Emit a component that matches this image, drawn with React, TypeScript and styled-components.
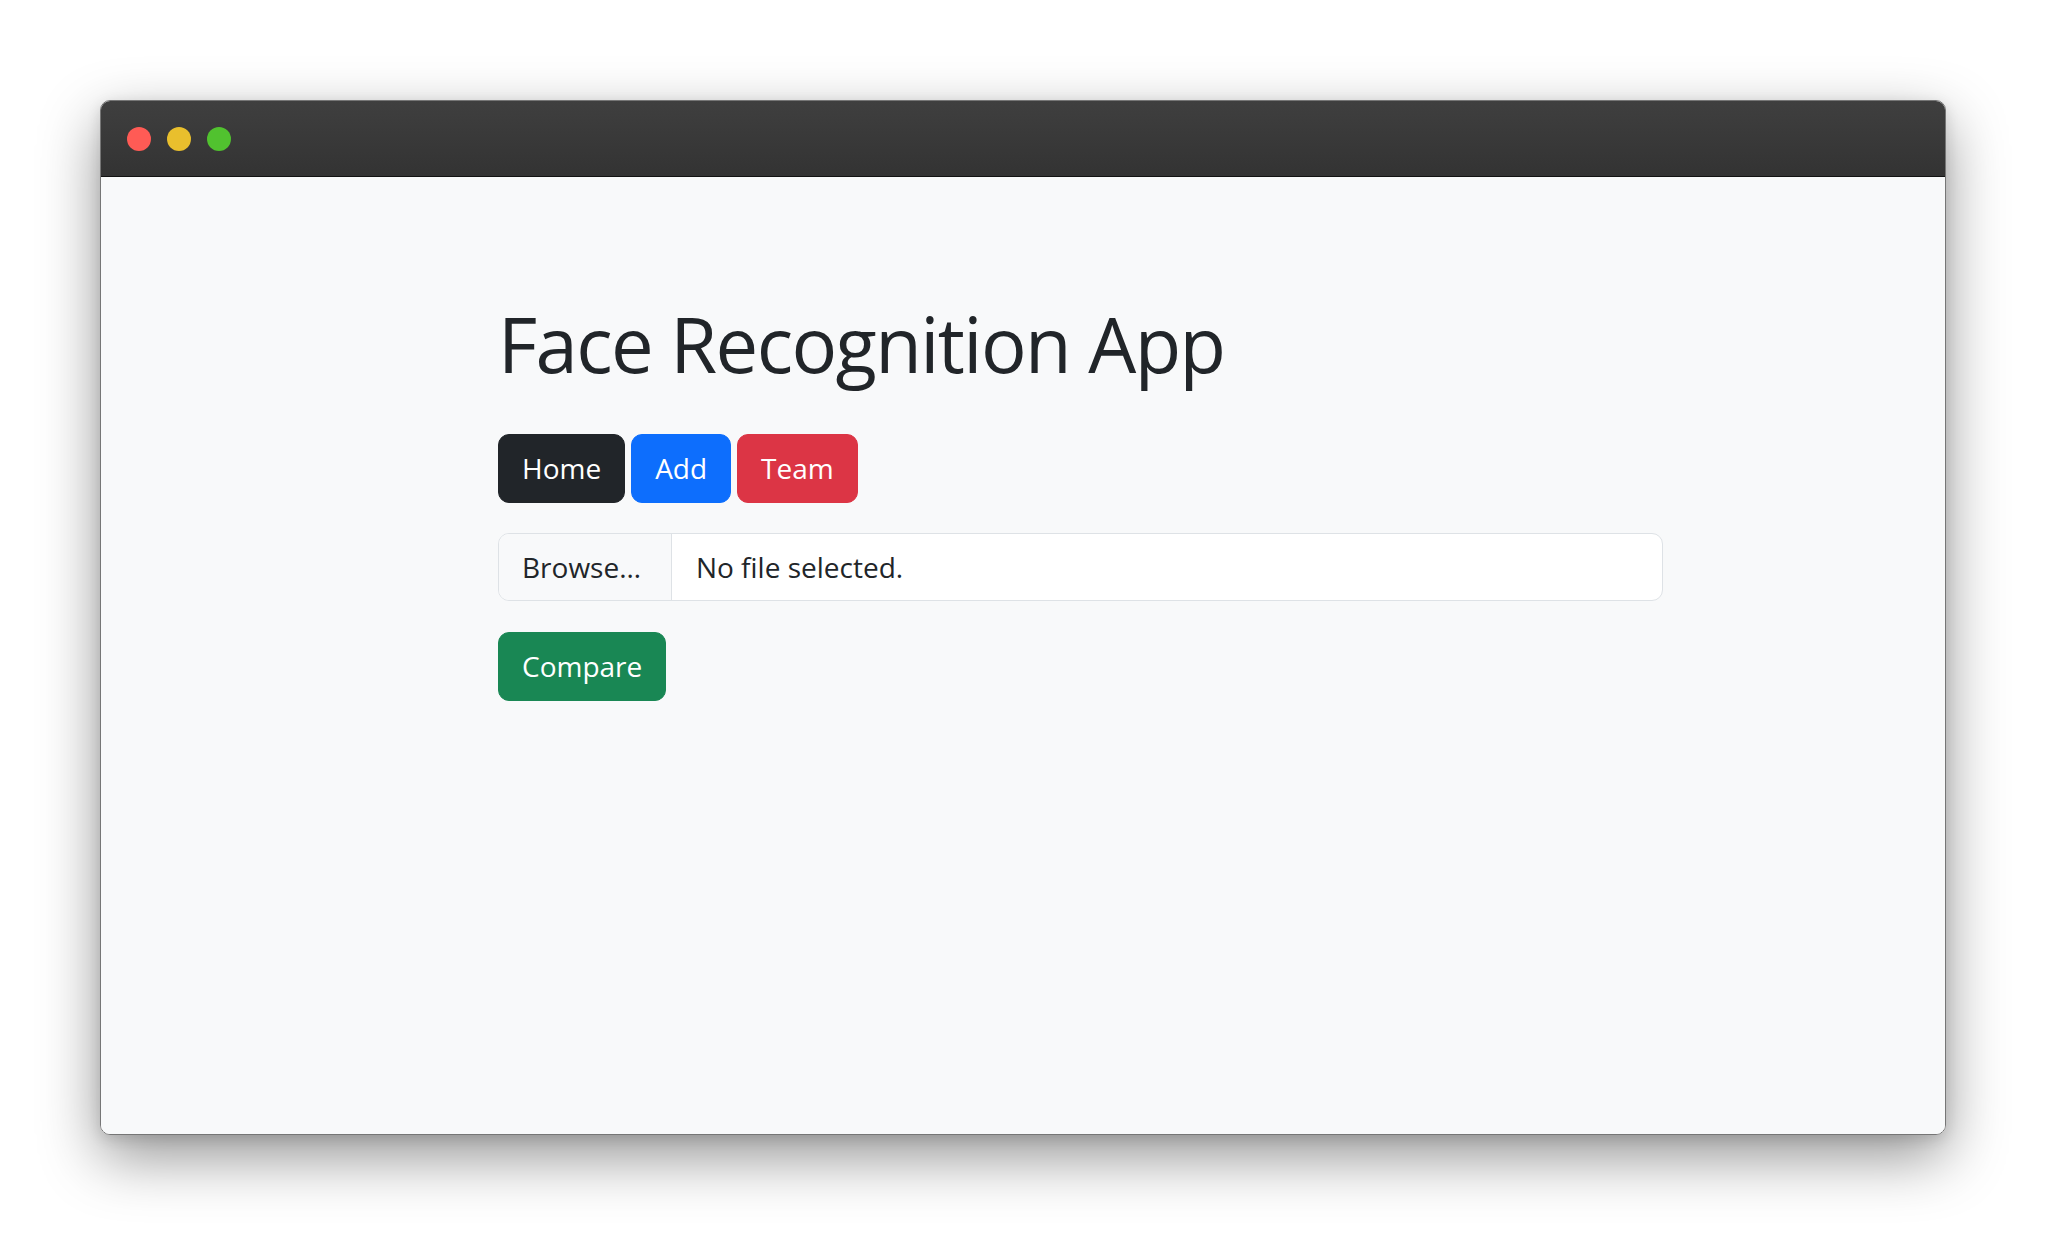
import React from 'react';
import styled, { createGlobalStyle } from 'styled-components';

const GlobalStyle = createGlobalStyle`
    html, body {
        margin: 0;
        padding: 0;
        background: #ffffff;
    }

    body {
        font-family: "Open Sans", "Noto Sans", sans-serif;
        color: #212529;
    }
`;

const Page = styled.div`
    min-height: 100vh;
    box-sizing: border-box;
    padding: 100px 0 0 100px;
`;

const Window = styled.div`
    width: 1846px;
    height: 1035px;
    box-sizing: border-box;
    display: flex;
    flex-direction: column;
    border: 1px solid #767676;
    border-radius: 10px;
    overflow: hidden;
    box-shadow: 0 22px 60px rgba(0, 0, 0, 0.42), 0 4px 14px rgba(0, 0, 0, 0.12);
`;

const TitleBar = styled.div`
    height: 75px;
    flex: none;
    display: flex;
    align-items: center;
    gap: 16px;
    padding-left: 26px;
    background: linear-gradient(#3f3f3f, #333333);
    border-bottom: 1px solid #121212;
`;

const Dot = styled.span<{ $color: string }>`
    width: 24px;
    height: 24px;
    border-radius: 50%;
    background: ${(p) => p.$color};
`;

const Body = styled.main`
    flex: 1;
    background: #f8f9fa;
    padding: 121px 0 0 397px;
`;

const Content = styled.div`
    width: 1165px;
`;

const Heading = styled.h1`
    margin: 0 0 45px;
    font-size: 76px;
    font-weight: 400;
    line-height: 91px;
    letter-spacing: -1.6px;
    color: #212529;
`;

const NavRow = styled.nav`
    display: flex;
    gap: 6px;
`;

const Button = styled.button<{ $bg: string }>`
    box-sizing: border-box;
    height: 69px;
    padding: 0 23px;
    border: 1px solid ${(p) => p.$bg};
    border-radius: 11px;
    background: ${(p) => p.$bg};
    color: #ffffff;
    font-family: inherit;
    font-size: 28px;
    line-height: 41px;
    cursor: pointer;
`;

const FileField = styled.label`
    margin-top: 30px;
    height: 68px;
    box-sizing: border-box;
    display: flex;
    border: 1px solid #dee2e6;
    border-radius: 11px;
    overflow: hidden;
    background: #ffffff;
    font-size: 28px;
    line-height: 41px;
    cursor: pointer;

    input {
        display: none;
    }
`;

const BrowsePart = styled.span`
    display: flex;
    align-items: center;
    padding: 0 30px 0 23px;
    background: #f8f9fa;
    border-right: 1px solid #dee2e6;
`;

const FileName = styled.span`
    display: flex;
    align-items: center;
    padding: 0 24px;
`;

const ActionRow = styled.div`
    margin-top: 31px;
`;

const dots = ['#ff5b55', '#e9bf2d', '#51c22f'];

const App = () => {
    return (
        <>
            <GlobalStyle />
            <Page>
                <Window>
                    <TitleBar>
                        {dots.map((c) => (
                            <Dot key={c} $color={c} />
                        ))}
                    </TitleBar>
                    <Body>
                        <Content>
                            <Heading>Face Recognition App</Heading>
                            <NavRow>
                                <Button $bg="#212529">Home</Button>
                                <Button $bg="#0d6efd">Add</Button>
                                <Button $bg="#dc3545">Team</Button>
                            </NavRow>
                            <FileField>
                                <input type="file" />
                                <BrowsePart>Browse…</BrowsePart>
                                <FileName>No file selected.</FileName>
                            </FileField>
                            <ActionRow>
                                <Button $bg="#198754">Compare</Button>
                            </ActionRow>
                        </Content>
                    </Body>
                </Window>
            </Page>
        </>
    );
};

export default App;
